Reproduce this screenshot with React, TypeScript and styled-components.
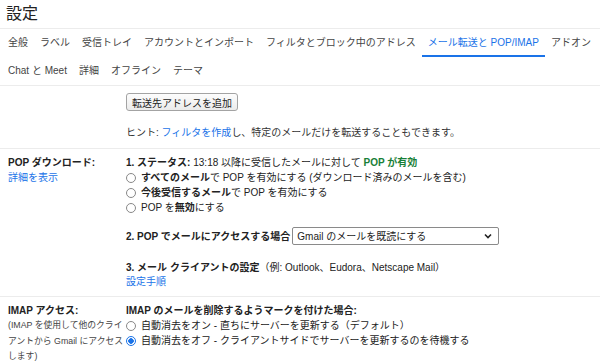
import React from 'react';
import styled, {createGlobalStyle} from 'styled-components';

const GlobalStyle = createGlobalStyle`
  body {
    margin: 0;
    background: #fff;
    color: #222;
    font-family: "Liberation Sans", "Noto Sans CJK JP", sans-serif;
    font-size: 10px;
  }
`;

const Page = styled.div`
  width: 600px;
`;

const Title = styled.h1`
  margin: 0;
  height: 28px;
  padding-left: 6px;
  font-size: 16px;
  font-weight: 400;
  line-height: 28px;
  border-bottom: 1px solid #ececec;
`;

const Tabs = styled.nav`
  border-bottom: 1px solid #ececec;
`;

const TabRow = styled.div`
  display: flex;
  padding-left: 2px;
`;

const Tab = styled.div<{ $active?: boolean }>`
  height: 28px;
  line-height: 28px;
  padding: 0 6px;
  white-space: nowrap;
  color: ${p => (p.$active ? '#1a73e8' : '#444')};
  box-shadow: ${p => (p.$active ? 'inset 0 -2px 0 #1a73e8' : 'none')};
`;

const Section = styled.section<{ $pad: string }>`
  display: grid;
  grid-template-columns: 126px 1fr;
  border-bottom: 1px solid #ececec;
  padding: ${p => p.$pad};
`;

const Label = styled.div`
  padding-left: 8px;
  line-height: 15px;
`;

const LabelTitle = styled.div`
  font-weight: 700;
`;

const Note = styled.div`
  font-size: 8.8px;
  line-height: 15.5px;
  color: #444;
  padding-right: 2px;
`;

const Body = styled.div`
  line-height: 15px;
`;

const Link = styled.a`
  color: #1a73e8;
  text-decoration: none;
`;

const Button = styled.button`
  height: 18px;
  padding: 0 5px;
  font-family: inherit;
  font-size: 10px;
  color: #222;
  background: linear-gradient(#fdfdfd, #ebebeb);
  border: 1px solid #a3a3a3;
  border-radius: 3px;
`;

const Hint = styled.div`
  margin-top: 14px;
  color: #333;
`;

const Green = styled.span`
  color: #188038;
  font-weight: 700;
`;

const Option = styled.label`
  display: flex;
  align-items: center;
  height: 15px;
`;

const Radio = styled.span<{ $checked?: boolean }>`
  box-sizing: border-box;
  width: 10px;
  height: 10px;
  margin-right: 5px;
  border-radius: 50%;
  border: 1px solid ${p => (p.$checked ? '#1a73e8' : '#888')};
  background: ${p => (p.$checked ? 'radial-gradient(circle, #1a73e8 0 2.5px, #fff 3px)' : '#fff')};
  flex-shrink: 0;
`;

const Step = styled.div<{ $gap: number }>`
  margin-top: ${p => p.$gap}px;
`;

const SelectRow = styled.div`
  display: flex;
  align-items: center;
  height: 18px;
`;

const Select = styled.div`
  box-sizing: border-box;
  display: flex;
  align-items: center;
  justify-content: space-between;
  width: 207px;
  height: 18px;
  margin-left: 2px;
  padding: 0 6px 0 4px;
  border: 1px solid #8a8a8a;
  border-radius: 2px;
`;

const ClientBlock = styled.div`
  line-height: 14px;
`;

const Heading = styled.div`
  font-weight: 700;
`;

const Chevron = () => (
  <svg width="8" height="6" viewBox="0 0 8 6">
    <path d="M1 1.5 L4 4.5 L7 1.5" stroke="#222" strokeWidth="1.6" fill="none" />
  </svg>
);

const topTabs = ['全般', 'ラベル', '受信トレイ', 'アカウントとインポート', 'フィルタとブロック中のアドレス', 'メール転送と POP/IMAP', 'アドオン'];
const bottomTabs = ['Chat と Meet', '詳細', 'オフライン', 'テーマ'];

export default function App() {
  return <Page>
    <GlobalStyle />
    <Title>設定</Title>
    <Tabs>
      <TabRow>
        {topTabs.map(t => <Tab key={t} $active={t === 'メール転送と POP/IMAP'}>{t}</Tab>)}
      </TabRow>
      <TabRow>
        {bottomTabs.map(t => <Tab key={t}>{t}</Tab>)}
      </TabRow>
    </Tabs>

    <Section $pad="7px 0 8px">
      <div />
      <Body>
        <Button>転送先アドレスを追加</Button>
        <Hint>ヒント: <Link>フィルタを作成</Link>し、特定のメールだけを転送することもできます。</Hint>
      </Body>
    </Section>

    <Section $pad="6px 0 7px">
      <Label>
        <LabelTitle>POP ダウンロード:</LabelTitle>
        <Link>詳細を表示</Link>
      </Label>
      <Body>
        <div><b>1. ステータス:</b> 13:18 以降に受信したメールに対して <Green>POP が有効</Green></div>
        <Option><Radio /><span><b>すべてのメール</b>で POP を有効にする (ダウンロード済みのメールを含む)</span></Option>
        <Option><Radio /><span><b>今後受信するメール</b>で POP を有効にする</span></Option>
        <Option><Radio /><span>POP を<b>無効</b>にする</span></Option>
        <Step $gap={12}>
          <SelectRow>
            <b>2. POP でメールにアクセスする場合</b>
            <Select><span>Gmail のメールを既読にする</span><Chevron /></Select>
          </SelectRow>
        </Step>
        <Step $gap={16}>
          <ClientBlock>
            <div><b>3. メール クライアントの設定</b>（例: Outlook、Eudora、Netscape Mail）</div>
            <Link>設定手順</Link>
          </ClientBlock>
        </Step>
      </Body>
    </Section>

    <Section $pad="6px 0 0">
      <Label>
        <LabelTitle>IMAP アクセス:</LabelTitle>
        <Note>(IMAP を使用して他のクライアントから Gmail にアクセスします)</Note>
      </Label>
      <Body>
        <Heading>IMAP のメールを削除するようマークを付けた場合:</Heading>
        <Option><Radio /><span>自動消去をオン - 直ちにサーバーを更新する（デフォルト）</span></Option>
        <Option><Radio $checked /><span>自動消去をオフ - クライアントサイドでサーバーを更新するのを待機する</span></Option>
      </Body>
    </Section>
  </Page>;
}
